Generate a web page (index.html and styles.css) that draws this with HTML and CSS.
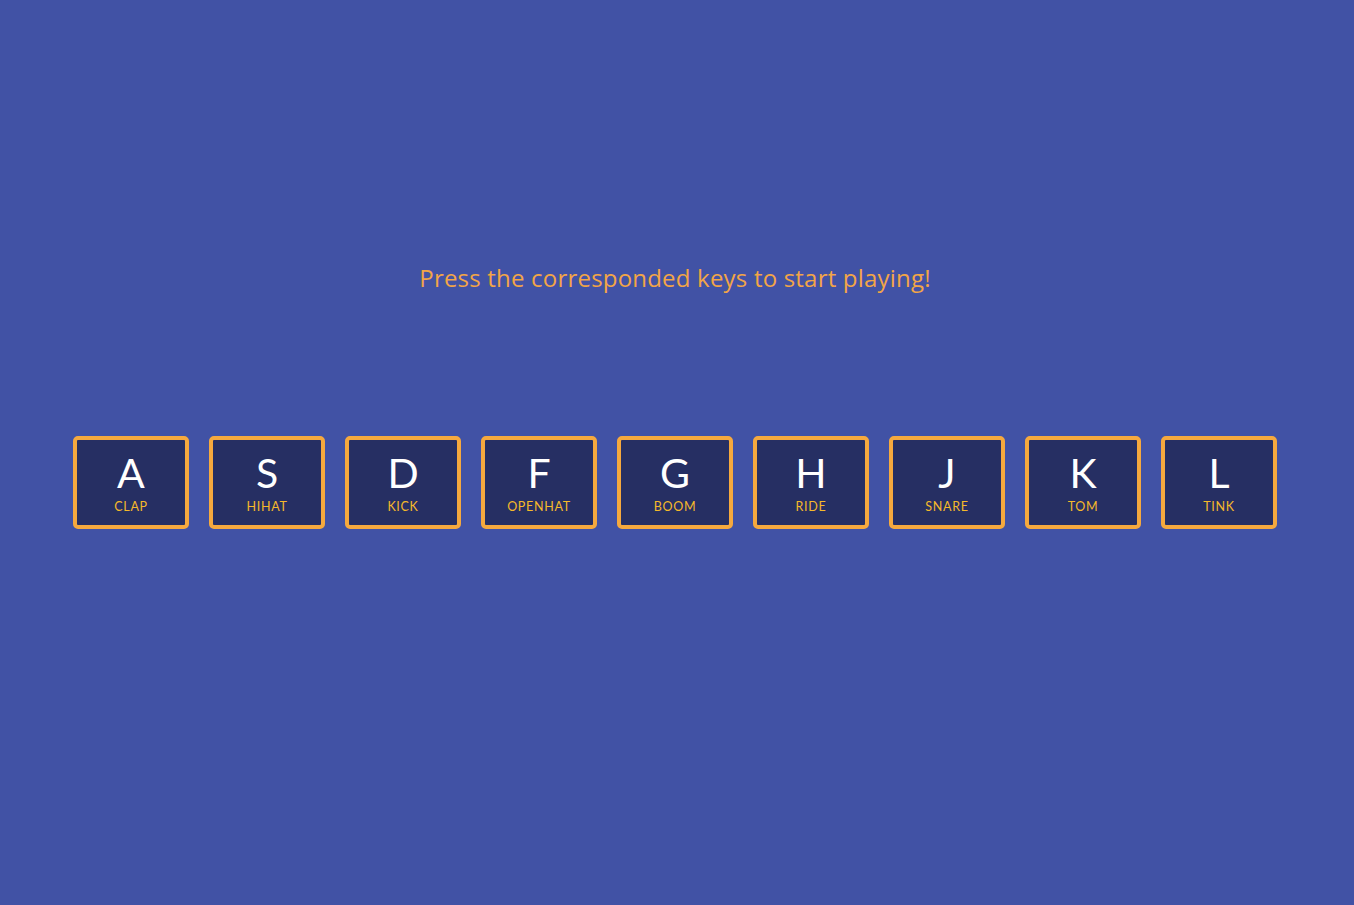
FILE: index.html
```html
<!DOCTYPE html>
<html lang="en">
<head>
<meta charset="UTF-8">
<title>Drum Kit</title>
<link rel="stylesheet" href="styles.css">
</head>
<body>
<main class="page">
  <h1 class="title">Press the corresponded keys to start playing!</h1>
  <div class="keys">
    <div class="key"><kbd>A</kbd><span class="sound">CLAP</span></div>
    <div class="key"><kbd>S</kbd><span class="sound">HIHAT</span></div>
    <div class="key"><kbd>D</kbd><span class="sound">KICK</span></div>
    <div class="key"><kbd>F</kbd><span class="sound">OPENHAT</span></div>
    <div class="key"><kbd>G</kbd><span class="sound">BOOM</span></div>
    <div class="key"><kbd>H</kbd><span class="sound">RIDE</span></div>
    <div class="key"><kbd>J</kbd><span class="sound">SNARE</span></div>
    <div class="key"><kbd>K</kbd><span class="sound">TOM</span></div>
    <div class="key"><kbd>L</kbd><span class="sound">TINK</span></div>
  </div>
</main>
</body>
</html>
```
FILE: styles.css
```css
html, body {
  margin: 0;
  padding: 0;
  height: 100%;
}
body {
  background: #4152a5;
  font-family: Lato, "Noto Sans", sans-serif;
}
.page {
  padding: 262px 4px 0 0;
  display: flex;
  flex-direction: column;
  align-items: center;
}
.title {
  margin: 0;
  font-family: "Open Sans", Lato, sans-serif;
  font-weight: 400;
  font-size: 24px;
  line-height: 32px;
  color: #f2a547;
  letter-spacing: 0.2px;
}
.keys {
  margin-top: 142px;
  display: flex;
  gap: 20px;
  justify-content: center;
}
.key {
  box-sizing: border-box;
  width: 116px;
  height: 93px;
  border: 4px solid #f6a93e;
  border-radius: 5px;
  background: #262f63;
  display: flex;
  flex-direction: column;
  align-items: center;
  padding-top: 11px;
}
.key kbd {
  font-family: Lato, sans-serif;
  font-size: 41px;
  line-height: 44px;
  color: #ffffff;
}
.sound {
  margin-top: 5px;
  font-family: Lato, sans-serif;
  font-size: 12.5px;
  line-height: 14px;
  letter-spacing: 0.7px;
  color: #f5b92a;
}
```
